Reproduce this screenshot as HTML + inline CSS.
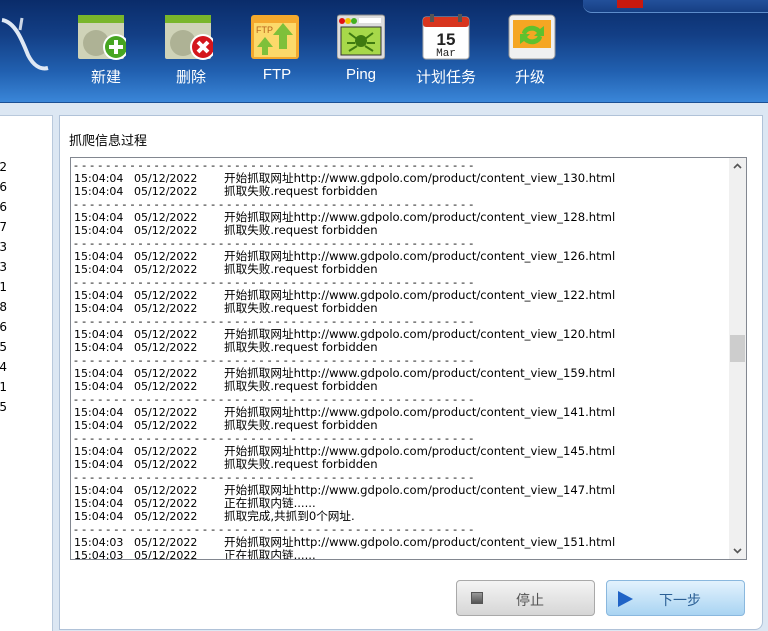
<!DOCTYPE html>
<html><head><meta charset="utf-8"><style>
*{margin:0;padding:0;box-sizing:border-box}
body{width:768px;height:631px;overflow:hidden;background:#dce7f3;font-family:"Liberation Sans","Noto Sans CJK SC",sans-serif;position:relative}
#hdr{position:absolute;left:0;top:0;width:768px;height:103px;background:linear-gradient(#0a2c6a 0%,#133f86 35%,#2160b0 70%,#3a86d8 100%);border-bottom:1px solid #1b4f94}
.tb{position:absolute;top:0;left:583px;width:200px;height:13px;background:linear-gradient(#23509a,#163f84);border-radius:0 0 0 9px;border-bottom:1px solid #5d8ccb}
.ic{position:absolute;top:13px;width:48px;height:48px}
.lb{position:absolute;top:66px;color:#fff;font-size:15px;text-align:center;width:80px}
#left{position:absolute;left:0;top:115px;width:53px;height:516px;background:#fff;border-right:1px solid #b9c9dc;border-top:1px solid #b9c9dc}
#left div{position:absolute;right:45px;font-size:12px;color:#000;font-family:"DejaVu Sans",sans-serif}
#right{position:absolute;left:59px;top:115px;width:704px;height:515px;background:#fff;border:1px solid #b0c2d8;border-radius:0 0 8px 0}
#ttl{position:absolute;left:69px;top:130px;font-size:13px}
#log{position:absolute;left:70px;top:157px;width:677px;height:403px;border:1px solid #828790;background:#fff;overflow:hidden}
#lc{position:absolute;left:3px;top:1px;font-family:"DejaVu Sans","Noto Sans CJK SC",sans-serif;font-size:11px;line-height:13px;color:#000;white-space:pre}
.r{height:13px;position:relative}
.r span{position:absolute;top:0}
.m{font-size:11.6px}
#sb{position:absolute;right:0;top:0;width:17px;height:401px;background:#f0f0f0}
.btn{position:absolute;top:580px;width:139px;height:36px;border-radius:4px;font-size:14px}
</style></head><body>
<div id="hdr">
<div class="tb"><div style="position:absolute;left:34px;top:0;width:26px;height:8px;background:#c8190f"></div></div>
<svg style="position:absolute;left:0;top:10px" width="50" height="65"><path d="M2 10 C15 12 22 30 28 45 C33 55 40 60 48 58" stroke="#dfe8f4" stroke-width="4" fill="none"/><path d="M20 20 L22 8" stroke="#cbd6e6" stroke-width="3"/></svg>
<svg class="ic" style="left:78px" viewBox="0 0 48 48"><rect x="0" y="2" width="46" height="44" rx="2" fill="#cfd3b8"/><rect x="0" y="2" width="46" height="8" fill="#79b62b"/><circle cx="18" cy="30" r="13" fill="#aeb295"/><circle cx="38" cy="34" r="13" fill="#fff"/><circle cx="38" cy="34" r="11" fill="#46a521"/><path d="M38 27v14M31 34h14" stroke="#fff" stroke-width="4"/></svg>
<div class="lb" style="left:66px">新建</div>
<svg class="ic" style="left:165px" viewBox="0 0 48 48"><rect x="0" y="2" width="46" height="44" rx="2" fill="#cfd3b8"/><rect x="0" y="2" width="46" height="8" fill="#79b62b"/><circle cx="18" cy="30" r="13" fill="#aeb295"/><circle cx="38" cy="34" r="13" fill="#fff"/><circle cx="38" cy="34" r="11" fill="#d4161c"/><path d="M33 29l10 10M43 29l-10 10" stroke="#fff" stroke-width="4"/></svg>
<div class="lb" style="left:151px">删除</div>
<svg class="ic" style="left:251px" viewBox="0 0 48 48"><rect x="0" y="2" width="48" height="44" rx="3" fill="#f4a92d"/><rect x="3" y="10" width="42" height="34" fill="#fcd96a"/><path d="M32 10l10 12h-6v14h-8V22h-6z M14 24l8 10h-5v8h-6v-8H6z" fill="#7fc03a"/><text x="5" y="20" font-size="9" fill="#b7641c" font-family="Liberation Sans">FTP</text></svg>
<div class="lb" style="left:237px">FTP</div>
<svg class="ic" style="left:337px" viewBox="0 0 48 48"><rect x="0" y="2" width="48" height="44" rx="3" fill="#ddd" stroke="#888"/><circle cx="5" cy="8" r="3" fill="#e01010"/><circle cx="11" cy="8" r="3" fill="#f3c400"/><circle cx="17" cy="8" r="3" fill="#44b020"/><rect x="22" y="5" width="22" height="5" fill="#fff"/><rect x="4" y="14" width="40" height="28" fill="#a7d84a" stroke="#333"/><circle cx="24" cy="28" r="6" fill="#3f7a10"/><path d="M12 20l8 6M36 20l-8 6M10 30h8M38 30h-8M12 38l8-5M36 38l-8-5" stroke="#3f7a10" stroke-width="2"/></svg>
<div class="lb" style="left:321px">Ping</div>
<svg class="ic" style="left:422px" viewBox="0 0 48 48"><rect x="1" y="4" width="46" height="42" rx="3" fill="#fff" stroke="#aaa"/><rect x="1" y="4" width="46" height="10" rx="3" fill="#d8351e"/><rect x="8" y="1" width="4" height="8" fill="#555"/><rect x="36" y="1" width="4" height="8" fill="#555"/><text x="24" y="32" font-size="17" font-weight="bold" text-anchor="middle" font-family="Liberation Sans" fill="#222">15</text><text x="24" y="43" font-size="11" text-anchor="middle" font-family="Liberation Mono" fill="#222">Mar</text></svg>
<div class="lb" style="left:406px">计划任务</div>
<svg class="ic" style="left:508px" viewBox="0 0 48 48"><rect x="1" y="2" width="46" height="44" rx="4" fill="#f0f0f0" stroke="#999"/><rect x="5" y="7" width="38" height="28" fill="#f5a623"/><path d="M14 20a10 8 0 0 1 18-4l4-3v10h-10l3-3a6 5 0 0 0-11 2z M34 24a10 8 0 0 1-18 4l-4 3V21h10l-3 3a6 5 0 0 0 11-2z" fill="#5ec12e"/></svg>
<div class="lb" style="left:490px">升级</div>
</div>
<div id="left">
<div style="top:44px">2</div><div style="top:64px">6</div><div style="top:84px">6</div><div style="top:104px">7</div><div style="top:124px">3</div><div style="top:144px">3</div><div style="top:164px">1</div><div style="top:184px">8</div><div style="top:204px">6</div><div style="top:224px">5</div><div style="top:244px">4</div><div style="top:264px">1</div><div style="top:284px">5</div>
</div>
<div id="right"></div>
<div id="ttl">抓爬信息过程</div>
<div id="log"><div id="lc"></div>
<div id="sb"><svg width="17" height="17"><path d="M5 10l3.5-3.5L12 10" stroke="#555" stroke-width="1.6" fill="none"/></svg><div style="position:absolute;left:1px;top:177px;width:15px;height:27px;background:#cdcdcd"></div><svg style="position:absolute;bottom:0;left:0" width="17" height="17"><path d="M5 7l3.5 3.5L12 7" stroke="#555" stroke-width="1.6" fill="none"/></svg></div>
</div>
<div class="btn" style="left:456px;background:linear-gradient(#f4f4f4,#d6d6d6);border:1px solid #a9a9a9;color:#555"><div style="position:absolute;left:14px;top:11px;width:12px;height:12px;border:1px solid #555;background:linear-gradient(#999,#555)"></div><span style="position:absolute;left:59px;top:9px">停止</span></div>
<div class="btn" style="left:606px;background:linear-gradient(#e3f2fd,#a9d4f2);border:1px solid #8ab8de;color:#2a5f95"><svg style="position:absolute;left:10px;top:9px" width="17" height="18"><path d="M1 1L16 9L1 17z" fill="#1f63c6"/></svg><span style="position:absolute;left:52px;top:9px">下一步</span></div>
<script>
var ids=[130,128,126,122,120,159,141,145],h='';
var D='<span style="left:0;letter-spacing:0.3px">'+Array(51).join('- ')+'</span>';
function row(t,m){return '<div class="r"><span style="left:0">'+t+'</span><span style="left:60px">05/12/2022</span><span class="m" style="left:150px">'+m+'</span></div>';}
ids.forEach(function(i){h+='<div class="r">'+D+'</div>'+row('15:04:04','开始抓取网址http://www.gdpolo.com/product/content_view_'+i+'.html')+row('15:04:04','抓取失败.request forbidden');});
h+='<div class="r">'+D+'</div>'+row('15:04:04','开始抓取网址http://www.gdpolo.com/product/content_view_147.html')+row('15:04:04','正在抓取内链......')+row('15:04:04','抓取完成,共抓到0个网址.');
h+='<div class="r">'+D+'</div>'+row('15:04:03','开始抓取网址http://www.gdpolo.com/product/content_view_151.html')+row('15:04:03','正在抓取内链......');
document.getElementById('lc').innerHTML=h;
</script>
</body></html>
